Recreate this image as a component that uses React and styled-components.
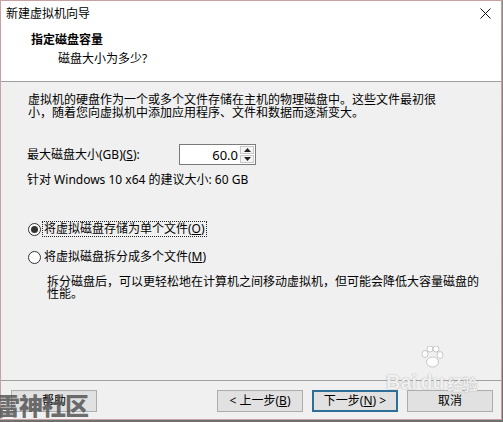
import React from "react";
import styled, { createGlobalStyle } from "styled-components";

const Global = createGlobalStyle`
  html, body { margin: 0; padding: 0; }
  body {
    background: #7c7c7c;
    font-family: "Noto Sans", "Noto Sans CJK SC", sans-serif;
    font-size: 12px;
    color: #000;
  }
  #root { width: 503px; height: 422px; }
`;

const Stage = styled.div`
  position: relative;
  width: 503px;
  height: 422px;
  background: linear-gradient(#8a8a8a, #6f6f6f);
  overflow: hidden;
`;

const Win = styled.div`
  width: 502px;
  height: 420px;
  box-sizing: border-box;
  border: 1px solid #c8a2a2;
  display: flex;
  flex-direction: column;
  background: #f0f0f0;
`;

const TitleBar = styled.div`
  height: 25px;
  background: #fff;
  display: flex;
  align-items: center;
  justify-content: space-between;
  padding: 0 10px 0 5px;
  line-height: 16px;
`;

const Header = styled.div`
  height: 56px;
  background: #fff;
  border-bottom: 1px solid #a0a0a0;
  padding-top: 6px;
  box-sizing: border-box;
`;

const HeadTitle = styled.div`
  font-weight: bold;
  line-height: 16px;
  padding-left: 30px;
`;

const HeadSub = styled.div`
  line-height: 16px;
  margin-top: 3px;
  padding-left: 57px;
`;

const Body = styled.div`
  flex: 1;
  padding-left: 26px;
  display: flex;
  flex-direction: column;
`;

const Para = styled.p`
  margin: ${(p) => p.$top || 0}px 0 0 ${(p) => p.$indent || 0}px;
  line-height: ${(p) => p.$lh || 13}px;
  width: ${(p) => p.$w || 420}px;
`;

const SizeRow = styled.div`
  margin-top: 25px;
  display: flex;
  align-items: center;
  height: 21px;
`;

const Label = styled.span`
  width: 152px;
  line-height: 16px;
`;

const SpinBox = styled.div`
  width: 77px;
  height: 21px;
  box-sizing: border-box;
  border: 1px solid #7a7a7a;
  background: #fff;
  display: flex;
  align-items: center;
  justify-content: flex-end;
  padding-right: 1px;
  gap: 2px;
`;

const SpinVal = styled.span`
  line-height: 16px;
  font-size: 13px;
`;

const SpinCol = styled.div`
  display: flex;
  flex-direction: column;
  gap: 1px;
`;

const SpinBtn = styled.div`
  width: 14px;
  height: 8px;
  box-sizing: border-box;
  border: 1px solid #c8c8c8;
  background: #f4f4f4;
  display: flex;
  align-items: center;
  justify-content: center;
`;

const RadioRow = styled.div`
  margin-top: ${(p) => p.$top}px;
  display: flex;
  align-items: center;
  height: 16px;
  padding-left: 1px;
`;

const Circle = styled.span`
  width: 13px;
  height: 13px;
  box-sizing: border-box;
  border-radius: 50%;
  border: 1px solid #333;
  background: #fff;
  display: flex;
  align-items: center;
  justify-content: center;
  margin-right: 1px;
  &::after {
    content: "";
    width: 7px;
    height: 7px;
    border-radius: 50%;
    background: ${(p) => (p.$on ? "#333" : "transparent")};
  }
`;

const RadioLabel = styled.span`
  line-height: 14px;
  padding: 0 1px;
  border: 1px dotted ${(p) => (p.$focus ? "#222" : "transparent")};
`;

const U = styled.span`
  text-decoration: underline;
`;

const Footer = styled.div`
  border-top: 1px solid #a0a0a0;
  display: flex;
  align-items: flex-start;
  justify-content: space-between;
  padding: 9px 8px 0 10px;
  box-sizing: border-box;
  height: 39px;
`;

const BtnGroup = styled.div`
  display: flex;
  gap: 9px;
`;

const Btn = styled.div`
  width: 86px;
  height: 22px;
  box-sizing: border-box;
  border: ${(p) => (p.$def ? "2px solid #2d6f98" : "1px solid #adadad")};
  background: #e1e1e1;
  display: flex;
  align-items: center;
  justify-content: center;
  line-height: 16px;
`;

const Watermark = styled.div`
  position: absolute;
  left: -4px;
  top: 390px;
  font-family: "Noto Sans CJK SC", sans-serif;
  font-size: 24px;
  font-weight: 900;
  line-height: 30px;
  color: rgba(85, 85, 85, 0.85);
  letter-spacing: -1px;
`;

const Baidu = styled.div`
  position: absolute;
  left: 386px;
  top: 372px;
  display: flex;
  align-items: flex-end;
  gap: 3px;
  color: rgba(255, 255, 255, 0.85);
  text-shadow: 0 0 1px rgba(140, 140, 140, 0.7), 0 0 2px rgba(160, 160, 160, 0.4);
  font-family: "Liberation Sans", "Noto Sans CJK SC", sans-serif;
  font-weight: bold;
`;

const BaiduWord = styled.span`
  font-size: ${(p) => p.$s}px;
  line-height: ${(p) => p.$s}px;
`;

const Paw = styled.svg`
  position: absolute;
  left: 34px;
  top: -26px;
`;

function Arrow({ up }) {
  return (
    <svg width="7" height="4" viewBox="0 0 7 4">
      <path d={up ? "M0 4 L3.5 0 L7 4 Z" : "M0 0 L3.5 4 L7 0 Z"} fill="#222" />
    </svg>
  );
}

export default function App() {
  return (
    <Stage>
      <Global />
      <Win>
        <TitleBar>
          <span>新建虚拟机向导</span>
          <svg width="11" height="11" viewBox="0 0 11 11">
            <path d="M0.5 0.5 L10.5 10.5 M10.5 0.5 L0.5 10.5" stroke="#111" strokeWidth="1" />
          </svg>
        </TitleBar>
        <Header>
          <HeadTitle>指定磁盘容量</HeadTitle>
          <HeadSub>磁盘大小为多少?</HeadSub>
        </Header>
        <Body>
          <Para $top={11} $indent={1}>
            虚拟机的硬盘作为一个或多个文件存储在主机的物理磁盘中。这些文件最初很小，随着您向虚拟机中添加应用程序、文件和数据而逐渐变大。
          </Para>
          <SizeRow>
            <Label>
              最大磁盘大小(GB)(<U>S</U>):
            </Label>
            <SpinBox>
              <SpinVal>60.0</SpinVal>
              <SpinCol>
                <SpinBtn>
                  <Arrow up />
                </SpinBtn>
                <SpinBtn>
                  <Arrow />
                </SpinBtn>
              </SpinCol>
            </SpinBox>
          </SizeRow>
          <Para $top={7} $lh={16}>
            针对 Windows 10 x64 的建议大小: 60 GB
          </Para>
          <RadioRow $top={33}>
            <Circle $on />
            <RadioLabel $focus>
              将虚拟磁盘存储为单个文件(<U>O</U>)
            </RadioLabel>
          </RadioRow>
          <RadioRow $top={12}>
            <Circle />
            <RadioLabel>
              将虚拟磁盘拆分成多个文件(<U>M</U>)
            </RadioLabel>
          </RadioRow>
          <Para $top={11} $indent={20} $lh={12} $w={440}>
            拆分磁盘后，可以更轻松地在计算机之间移动虚拟机，但可能会降低大容量磁盘的性能。
          </Para>
        </Body>
        <Footer>
          <Btn>帮助</Btn>
          <BtnGroup>
            <Btn>
              &lt; 上一步(<U>B</U>)
            </Btn>
            <Btn $def>
              下一步(<U>N</U>) &gt;
            </Btn>
            <Btn>取消</Btn>
          </BtnGroup>
        </Footer>
      </Win>
      <Watermark>雷神社区</Watermark>
      <Baidu>
        <Paw width="24" height="22" viewBox="0 0 24 22">
          <g fill="rgba(255,255,255,0.85)" stroke="rgba(150,150,150,0.6)" strokeWidth="0.8">
            <ellipse cx="5" cy="8" rx="3" ry="3.5" />
            <ellipse cx="10" cy="3" rx="3" ry="3" />
            <ellipse cx="16" cy="3" rx="3" ry="3" />
            <ellipse cx="20" cy="9" rx="3" ry="3.5" />
            <ellipse cx="12.5" cy="16" rx="6" ry="5" />
          </g>
        </Paw>
        <BaiduWord $s={20}>Bai</BaiduWord>
        <BaiduWord $s={20}>du</BaiduWord>
        <BaiduWord $s={15}>经验</BaiduWord>
      </Baidu>
    </Stage>
  );
}
